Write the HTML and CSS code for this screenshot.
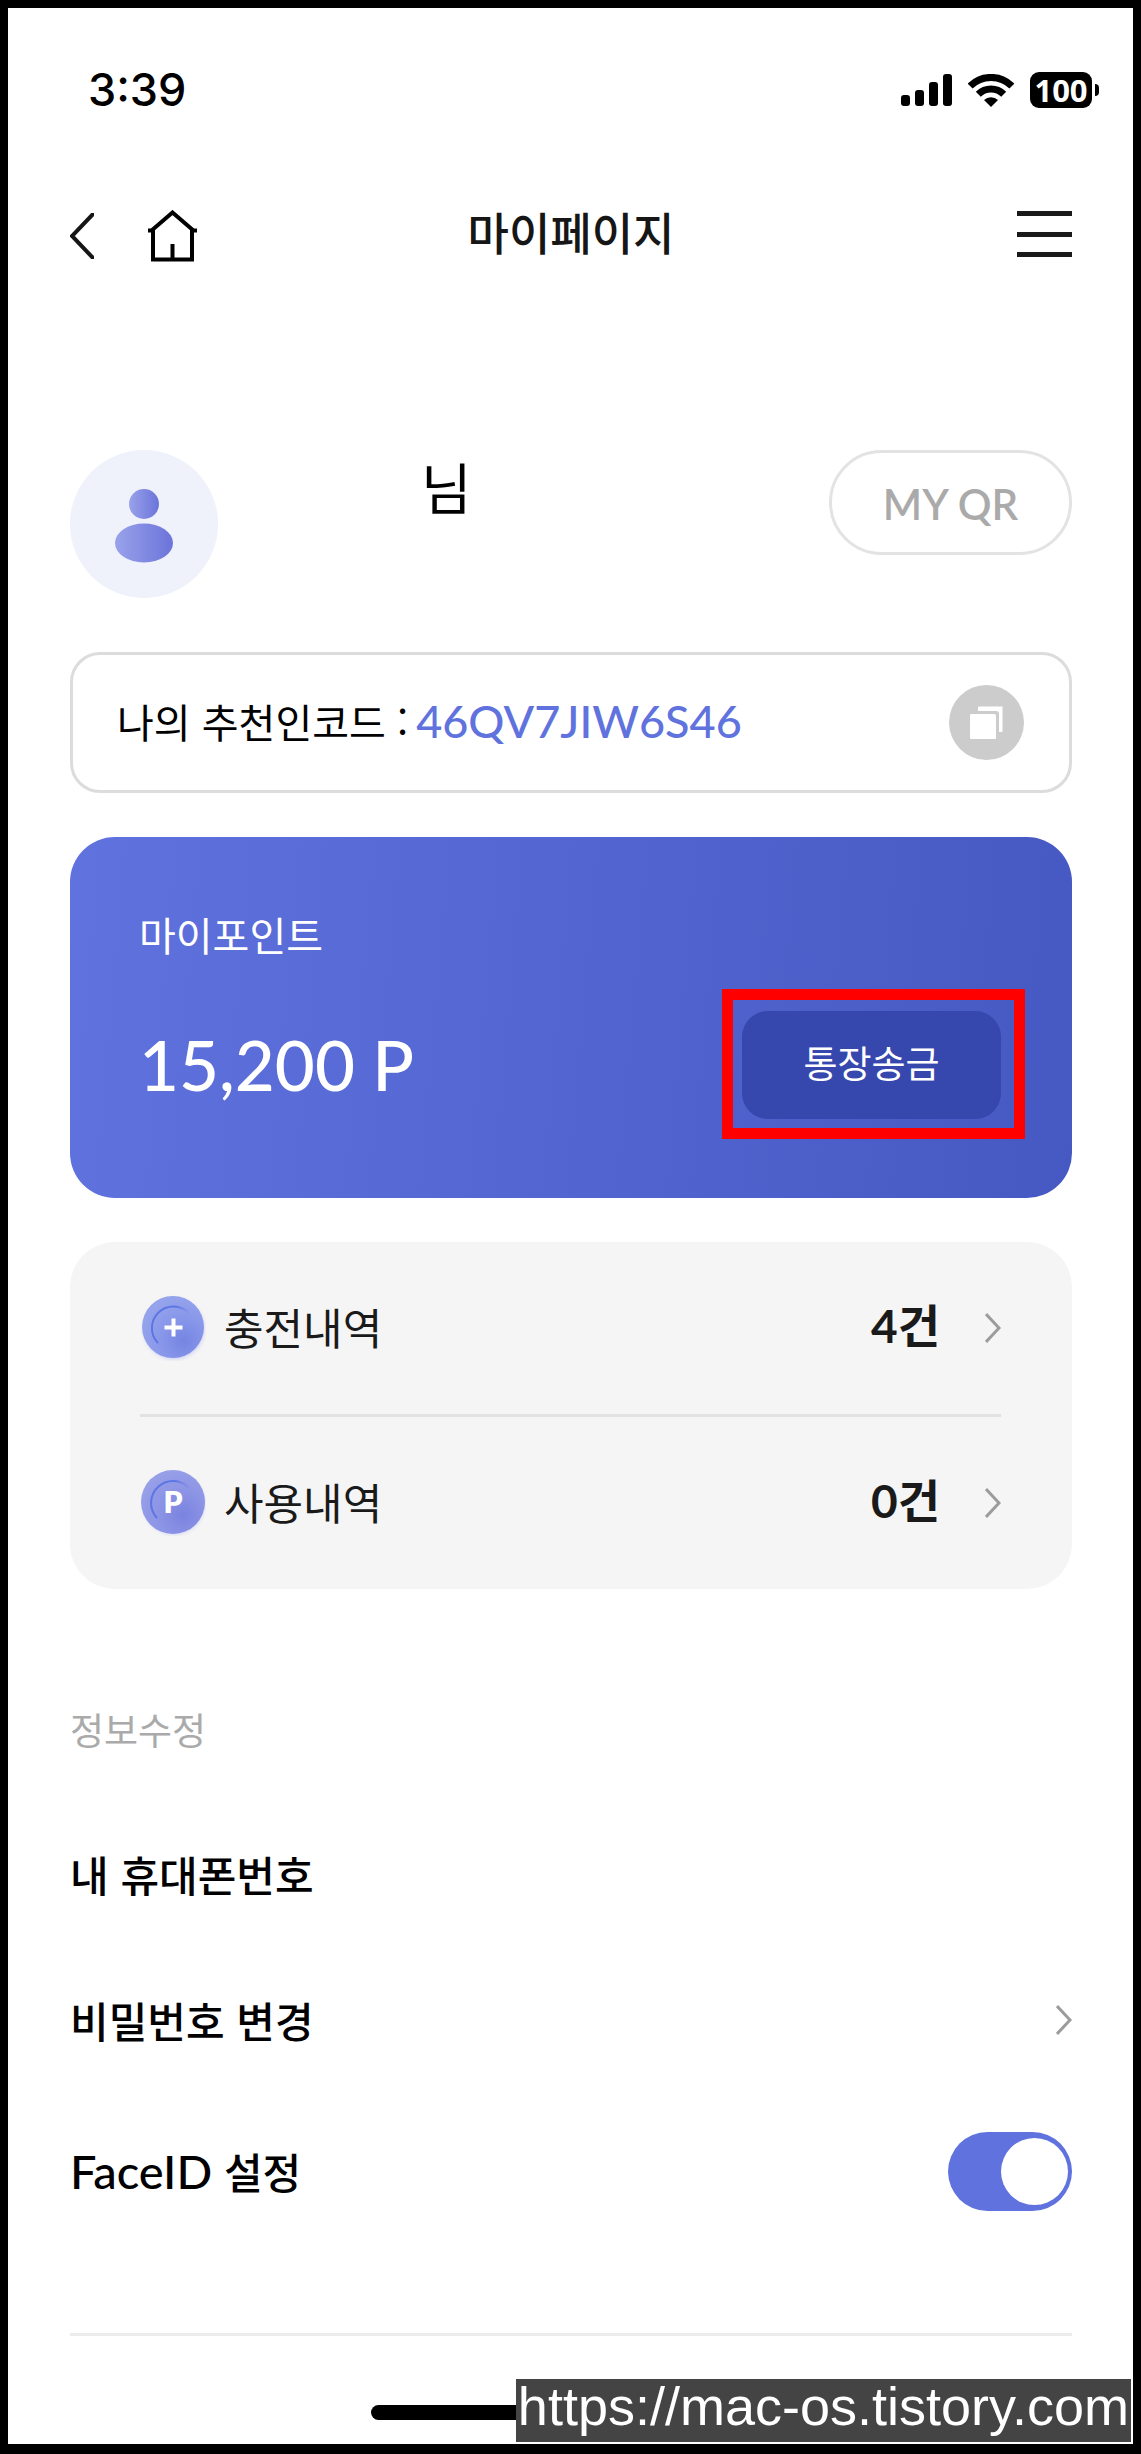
FILE: index.html
```html
<!DOCTYPE html>
<html lang="ko">
<head>
<meta charset="utf-8">
<meta name="viewport" content="width=device-width, initial-scale=1">
<title>마이페이지</title>
<link rel="stylesheet" href="styles.css">
</head>
<body>
<div class="screen">
  <div class="status-bar">
    <span class="time">3:39</span>
    <div class="status-icons">
      <svg class="signal" width="51" height="32" viewBox="0 0 51 32" aria-hidden="true">
        <rect x="0" y="21" width="9" height="11" rx="3"/>
        <rect x="14" y="16" width="9" height="16" rx="3"/>
        <rect x="28" y="8" width="9" height="24" rx="3"/>
        <rect x="42" y="0" width="9" height="32" rx="3"/>
      </svg>
      <svg class="wifi" width="46" height="33" viewBox="0 0 46 33" aria-hidden="true">
        <g fill="none" stroke="#000" stroke-width="7">
          <path d="M2.1 12.1A29.5 29.5 0 0 1 43.9 12.1"/>
          <path d="M10.3 20.3A18 18 0 0 1 35.7 20.3"/>
        </g>
        <path d="M23 33L16 26A10 10 0 0 1 30 26Z"/>
      </svg>
      <span class="battery">100</span>
      <span class="battery-tip"></span>
    </div>
  </div>

  <header class="top-bar">
    <div class="top-left">
      <button class="icon-button" type="button" aria-label="뒤로">
        <svg width="24" height="46" viewBox="0 0 24 46" fill="none" stroke="#161616" stroke-width="4"><path d="M24 0L2 23L24 46"/></svg>
      </button>
      <button class="icon-button" type="button" aria-label="홈">
        <svg width="51" height="52" viewBox="0 0 51 52" fill="none" stroke="#000" stroke-width="4"><path d="M1 20.5H6V49.5H45V20.5H50M4 21L25.500 2.500L47 21M25.500 49V34"/></svg>
      </button>
    </div>
    <h1 class="page-title">마이페이지</h1>
    <button class="icon-button menu-button" type="button" aria-label="메뉴">
      <svg width="55" height="46" viewBox="0 0 55 46" fill="#1a1a1a"><path d="M0 0H55V5H0ZM0 21H55V26H0ZM0 41H55V46H0Z"/></svg>
    </button>
  </header>

  <main class="content">
    <section class="profile">
      <svg class="avatar" width="148" height="148" viewBox="0 0 148 148" aria-hidden="true">
        <defs>
          <linearGradient id="person" x1="0" x2="1" y1="0" y2="0"><stop offset="0" stop-color="#99a2ea"/><stop offset="1" stop-color="#6b74d9"/></linearGradient>
        </defs>
        <circle cx="74" cy="74" r="74" fill="#eff1fb"/>
        <circle cx="74" cy="54" r="15" fill="url(#person)"/>
        <ellipse cx="74" cy="93" rx="29" ry="19.500" fill="url(#person)"/>
      </svg>
      <p class="user-name">님</p>
      <button class="qr-button" type="button">MY QR</button>
    </section>

    <section class="code-box">
      <span class="code-label">나의 추천인코드 :</span>
      <span class="code-value">46QV7JIW6S46</span>
      <button class="icon-button copy-button" type="button" aria-label="복사">
        <svg width="75" height="75" viewBox="0 0 75 75" fill="#fff"><circle cx="37.500" cy="37.500" r="37.500" fill="#ccc"/><path d="M29 22.500Q29 21.500 30 21.500H53.500V46Q53.500 47 52.500 47H50V29Q50 26 47 26H29Z"/><path d="M21 30Q21 29 22 29H45Q47 29 47 31V53Q47 54 46 54H22Q21 54 21 53Z"/></svg>
      </button>
    </section>

    <section class="points-card">
      <h2 class="points-title">마이포인트</h2>
      <div class="points-row">
        <strong class="points-value">15,200 P</strong>
        <div class="transfer">
          <button class="transfer-button" type="button">통장송금</button>
          <span class="highlight"></span>
        </div>
      </div>
    </section>

    <nav class="history-card">
      <a class="history-row" href="#charge">
        <svg class="coin" width="66" height="66" viewBox="0 0 66 66" aria-hidden="true">
          <defs>
            <radialGradient id="coin-a" cx=".67" cy=".72" r=".7"><stop offset="0" stop-color="#7585e2"/><stop offset=".5" stop-color="#8796e9"/><stop offset="1" stop-color="#95a3ec"/></radialGradient>
            <linearGradient id="rim" x1="0" x2="1" y1=".4" y2=".5"><stop offset="0" stop-color="#5c75e4"/><stop offset=".6" stop-color="#5c75e4"/><stop offset="1" stop-color="#5c75e4" stop-opacity="0"/></linearGradient>
            <filter id="soft" x="-20%" y="-20%" width="140%" height="140%"><feGaussianBlur stdDeviation="2"/></filter>
          </defs>
          <circle cx="34" cy="34" r="30" fill="#c9cef5" filter="url(#soft)"/>
          <circle cx="33" cy="32" r="31" fill="url(#coin-a)"/>
          <path d="M18 48A21 21 0 0 1 49 18" fill="none" stroke="url(#rim)" stroke-width="2"/>
          <path d="M33.500 23.500V41.500M24.500 32.500H42.500" stroke="#fff" stroke-width="4"/>
        </svg>
        <span class="history-name">충전내역</span>
        <strong class="history-count">4건</strong>
        <svg class="chevron" width="16" height="30" viewBox="0 0 16 30" aria-hidden="true"><path d="M1 1L14 15L1 29"/></svg>
      </a>
      <a class="history-row" href="#usage">
        <svg class="coin" width="66" height="66" viewBox="0 0 66 66" aria-hidden="true">
          <defs>
            <radialGradient id="coin-b" cx=".65" cy=".7" r=".7"><stop offset="0" stop-color="#7a83df"/><stop offset=".5" stop-color="#8b93e5"/><stop offset="1" stop-color="#979fe8"/></radialGradient>
          </defs>
          <circle cx="34" cy="34" r="30" fill="#c9cef5" filter="url(#soft)"/>
          <circle cx="33" cy="32" r="32" fill="url(#coin-b)"/>
          <path d="M17 48A21 21 0 0 1 49 18" fill="none" stroke="url(#rim)" stroke-width="2"/>
          <text class="coin-letter" x="33" y="43" text-anchor="middle">P</text>
        </svg>
        <span class="history-name">사용내역</span>
        <strong class="history-count">0건</strong>
        <svg class="chevron" width="16" height="30" viewBox="0 0 16 30" aria-hidden="true"><path d="M1 1L14 15L1 29"/></svg>
      </a>
    </nav>

    <section class="settings">
      <h2 class="settings-title">정보수정</h2>
      <div class="setting-row">내 휴대폰번호</div>
      <a class="setting-row" href="#password">비밀번호 변경
        <svg class="chevron" width="16" height="30" viewBox="0 0 16 30" aria-hidden="true"><path d="M1 1L14 15L1 29"/></svg>
      </a>
      <div class="setting-row">
        <label for="face-id"><span class="latin">FaceID</span> 설정</label>
        <input class="toggle" id="face-id" type="checkbox" checked>
      </div>
    </section>
  </main>

  <span class="home-indicator"></span>
  <span class="watermark">https://mac-os.tistory.com</span>
</div>
</body>
</html>
```
FILE: styles.css
```css
* {
  box-sizing: border-box;
}

body {
  margin: 0;
  background: #fff;
  color: #000;
  font-family: "Noto Sans CJK KR", sans-serif;
}

h1, h2, p {
  margin: 0;
}

button {
  padding: 0;
  border: 0;
  background: none;
  color: inherit;
  font: inherit;
  cursor: pointer;
}

a {
  color: inherit;
  text-decoration: none;
}

svg {
  display: block;
  flex: none;
}

.screen {
  position: relative;
  min-height: 100vh;
  border: 8px solid #000;
  border-bottom-width: 10px;
}

/* Status bar */
.status-bar {
  display: flex;
  align-items: center;
  justify-content: space-between;
  padding: 54px 34px 54px 80px;
}

.time {
  font: 500 45px/56px Inter, sans-serif;
}

.status-icons {
  display: flex;
  align-items: center;
}

.wifi {
  margin: 0 16px;
}

.battery {
  width: 62px;
  border-radius: 9px;
  background: #000;
  color: #fff;
  font: 700 31px/36px "Open Sans", sans-serif;
  text-align: center;
}

.battery-tip {
  width: 4px;
  height: 12px;
  margin-left: 3px;
  border-radius: 0 4px 4px 0;
  background: #000;
}

/* Top bar */
.top-bar {
  display: grid;
  grid-template-columns: 1fr auto 1fr;
  align-items: center;
  height: 128px;
  padding: 0 61px 0 62px;
}

.top-left {
  display: flex;
  align-items: center;
  gap: 53px;
}

.page-title {
  padding-bottom: 8px;
  color: #161616;
  font-size: 45px;
  font-weight: 500;
  line-height: 64px;
}

.menu-button {
  justify-self: end;
  padding-bottom: 4px;
}

/* Content */
.content {
  display: flex;
  flex-direction: column;
  gap: 44px;
  padding: 150px 61px 0 62px;
}

.profile {
  display: flex;
  align-items: flex-start;
  justify-content: space-between;
  margin-bottom: 10px;
}

.user-name {
  flex: 1;
  padding-left: 203px;
  font-size: 55px;
  line-height: 70px;
}

.qr-button {
  width: 243px;
  height: 105px;
  padding-top: 2px;
  border: 3px solid #e3e3e3;
  border-radius: 53px;
  color: #aaa;
  font: 600 42px/48px Lato, sans-serif;
}

.code-box {
  display: flex;
  align-items: center;
  height: 141px;
  padding: 0 45px 0 44px;
  border: 3px solid #dcdcdc;
  border-radius: 30px;
}

.code-label {
  padding-bottom: 4px;
  font-size: 40px;
  line-height: 60px;
}

.code-value {
  margin-left: 8px;
  padding-bottom: 4px;
  color: #6072de;
  font: 500 45px/60px Lato, sans-serif;
}

.copy-button {
  margin-left: auto;
}

.points-card {
  padding: 67px 71px 79px 69px;
  border-radius: 45px;
  background: linear-gradient(95deg, #6072de, #4658c2);
  color: #fff;
}

.points-title {
  font-size: 40px;
  font-weight: 400;
  line-height: 60px;
}

.points-row {
  display: flex;
  align-items: center;
  justify-content: space-between;
  margin-top: 47px;
}

.points-value {
  font: 500 69px/84px Lato, sans-serif;
}

.transfer {
  position: relative;
}

.transfer-button {
  width: 259px;
  height: 108px;
  padding-bottom: 6px;
  border-radius: 26px;
  background: #3648ae;
  font-size: 37px;
  line-height: 54px;
}

.highlight {
  position: absolute;
  inset: -22px -24px -20px -20px;
  border: 11px solid #f00;
  pointer-events: none;
}

.history-card {
  padding: 0 71px 0 70px;
  border-radius: 45px;
  background: #f5f5f5;
  color: #1a1a1a;
}

.history-row {
  display: flex;
  align-items: center;
  height: 172px;
}

.history-row + .history-row {
  height: 175px;
  border-top: 3px solid #e2e2e2;
}

.coin-letter {
  fill: #fff;
  font: 800 30px Lato, sans-serif;
}

.history-name {
  margin-left: 18px;
  padding-bottom: 4px;
  font-size: 43px;
  line-height: 62px;
}

.history-count {
  margin: 0 45px 0 auto;
  padding-bottom: 4px;
  font-family: Lato, "Noto Sans CJK KR", sans-serif;
  font-size: 46px;
  font-weight: 700;
  line-height: 62px;
}

.chevron {
  fill: none;
  stroke: #9c9c9c;
  stroke-width: 3;
}

/* Settings */
.settings {
  padding: 67px 0 84px;
  border-bottom: 3px solid #ececec;
}

.settings-title {
  margin-bottom: 43px;
  color: #aaa;
  font-size: 37px;
  font-weight: 400;
  line-height: 58px;
}

.setting-row {
  display: flex;
  align-items: center;
  justify-content: space-between;
  height: 146px;
  font-size: 42px;
  font-weight: 500;
  line-height: 62px;
}

.setting-row:last-child {
  height: 156px;
}

.latin {
  font-family: Lato, sans-serif;
  font-size: 47px;
}

.toggle {
  display: flex;
  align-items: center;
  width: 124px;
  height: 79px;
  margin: 0;
  padding: 0 4px;
  border-radius: 40px;
  background: #c8c8c8;
  appearance: none;
  cursor: pointer;
}

.toggle::before {
  width: 67px;
  height: 67px;
  border-radius: 50%;
  background: #fff;
  content: "";
}

.toggle:checked {
  justify-content: flex-end;
  background: #6072de;
}

/* Overlays at the bottom edge */
.home-indicator {
  position: absolute;
  bottom: 24px;
  left: 50%;
  width: 400px;
  height: 15px;
  margin-left: -200px;
  border-radius: 8px;
  background: #000;
}

.watermark {
  position: absolute;
  right: 2px;
  bottom: 2px;
  padding: 0 2px 9px;
  background: #444;
  color: #fff;
  font: 54px/54px "Liberation Sans", sans-serif;
}
```
